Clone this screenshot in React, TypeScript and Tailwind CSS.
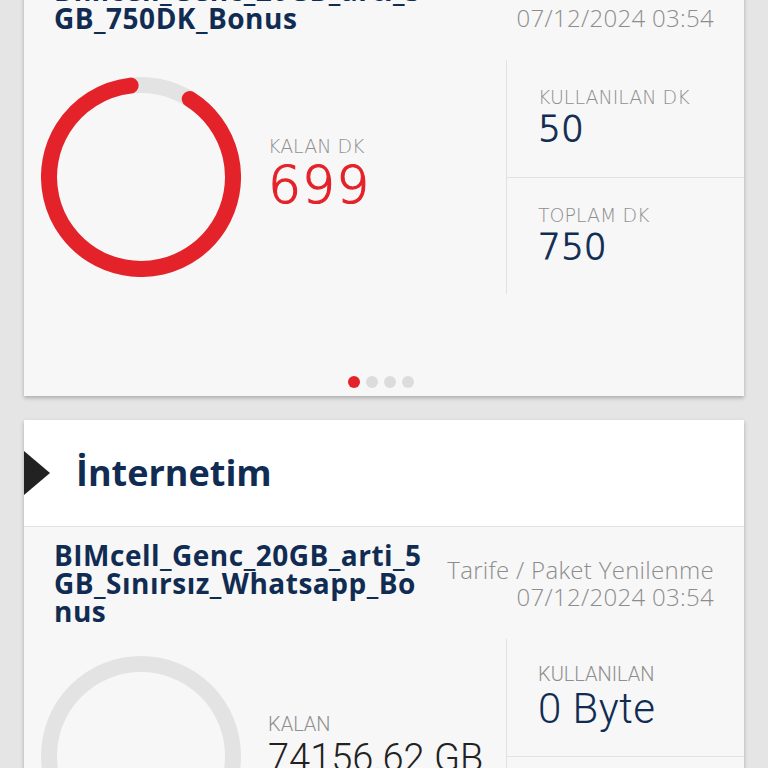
import React from "react";

const navy = "text-[#112c52]";

const Ring: React.FC<{ filled: boolean }> = ({ filled }) => (
  <svg width="200" height="200" viewBox="0 0 200 200" className="shrink-0">
    <circle cx="100" cy="100" r="92" fill="none" stroke="#e3e3e3" strokeWidth="16" />
    {filled && (
      <circle
        cx="100"
        cy="100"
        r="92"
        fill="none"
        stroke="#e42229"
        strokeWidth="16"
        strokeLinecap="round"
        strokeDasharray="515.4 578"
        transform="rotate(-58 100 100)"
      />
    )}
  </svg>
);

const Renewal: React.FC = () => (
  <div className="text-right font-['Open_Sans',sans-serif] font-light text-[24px] leading-[27px] tracking-[0.3px] text-[#8d8d8d] whitespace-nowrap">
    <div>Tarife / Paket Yenilenme</div>
    <div>07/12/2024 03:54</div>
  </div>
);

const Title: React.FC<{ lines: string[] }> = ({ lines }) => (
  <div className={`font-['Open_Sans',sans-serif] font-bold text-[28px] leading-[28px] tracking-[0.5px] ${navy}`}>
    {lines.map((l) => (
      <div key={l}>{l}</div>
    ))}
  </div>
);

const App: React.FC = () => {
  return (
    <div className="h-screen overflow-hidden bg-[#e5e5e5] px-6">
      {/* Konuşma kartı (üstü kesik) */}
      <div className="-mt-[38px] bg-[#f7f7f7] shadow-[0_2px_4px_rgba(0,0,0,0.25)]">
        <div className="flex items-center justify-between px-[30px] pt-[14px] mb-[28px]">
          <Title lines={["BIMcell_Genc_20GB_arti_5", "GB_750DK_Bonus"]} />
          <Renewal />
        </div>
        <div className="flex h-[234px]">
          <div className="flex flex-1 items-center pl-[17px] gap-[27px]">
            <Ring filled />
            <div className="font-['DejaVu_Sans',sans-serif] font-light mb-[6px]">
              <div className="text-[19px] leading-[22px] text-[#8f8f8f]">KALAN DK</div>
              <div className="text-[52px] leading-[56px] tracking-[1px] text-[#e42229] [-webkit-text-stroke:1.2px]">699</div>
            </div>
          </div>
          <div className="w-[238px] flex flex-col border-l border-[#e2e2e2] font-['DejaVu_Sans',sans-serif] font-light">
            <div className="flex-1 flex flex-col justify-center pl-[31px]">
              <div className="text-[19px] leading-[22px] text-[#8f8f8f]">KULLANILAN DK</div>
              <div className={`text-[36px] leading-[42px] [-webkit-text-stroke:1px] ${navy}`}>50</div>
            </div>
            <div className="flex-1 flex flex-col justify-center pl-[31px] border-t border-[#e2e2e2]">
              <div className="text-[19px] leading-[22px] text-[#8f8f8f]">TOPLAM DK</div>
              <div className={`text-[36px] leading-[42px] [-webkit-text-stroke:1px] ${navy}`}>750</div>
            </div>
          </div>
        </div>
        <div className="flex justify-center gap-[6px] mt-[82px] pb-[8px] pr-[6px]">
          <span className="w-3 h-3 rounded-full bg-[#e42229]" />
          <span className="w-3 h-3 rounded-full bg-[#dcdcdc]" />
          <span className="w-3 h-3 rounded-full bg-[#dcdcdc]" />
          <span className="w-3 h-3 rounded-full bg-[#dcdcdc]" />
        </div>
      </div>

      {/* İnternetim kartı */}
      <div className="mt-6 bg-[#f7f7f7] shadow-[0_2px_4px_rgba(0,0,0,0.25)]">
        <div className="h-[107px] bg-white border-b border-[#e3e3e3] flex items-center gap-[26px]">
          <svg width="26" height="44" viewBox="0 0 26 44">
            <polygon points="0,0 26,22 0,44" fill="#222222" />
          </svg>
          <span className={`font-['Open_Sans',sans-serif] font-bold text-[36px] ${navy}`}>İnternetim</span>
        </div>
        <div className="flex items-center justify-between px-[30px] pt-[14px] mb-[14px]">
          <Title lines={["BIMcell_Genc_20GB_arti_5", "GB_Sınırsız_Whatsapp_Bo", "nus"]} />
          <Renewal />
        </div>
        <div className="flex h-[234px]">
          <div className="flex flex-1 items-center pl-[17px] gap-[27px]">
            <Ring filled={false} />
            <div className="font-['Roboto',sans-serif] font-light mb-[20px]">
              <div className="text-[20px] leading-[24px] text-[#8f8f8f]">KALAN</div>
              <div className="text-[38px] leading-[44px] text-[#222] whitespace-nowrap">74156.62 GB</div>
            </div>
          </div>
          <div className="w-[238px] flex flex-col border-l border-[#e2e2e2] font-['Roboto',sans-serif] font-light">
            <div className="flex-1 flex flex-col justify-center pl-[31px]">
              <div className="text-[20px] leading-[24px] text-[#8f8f8f]">KULLANILAN</div>
              <div className={`text-[42px] leading-[46px] tracking-[0.5px] ${navy}`}>0 Byte</div>
            </div>
            <div className="flex-1 flex flex-col justify-center pl-[31px] border-t border-[#e2e2e2]">
              <div className="text-[20px] leading-[24px] text-[#8f8f8f]">TOPLAM</div>
              <div className={`text-[40px] leading-[46px] whitespace-nowrap ${navy}`}>74156.62 GB</div>
            </div>
          </div>
        </div>
      </div>
    </div>
  );
};

export default App;
